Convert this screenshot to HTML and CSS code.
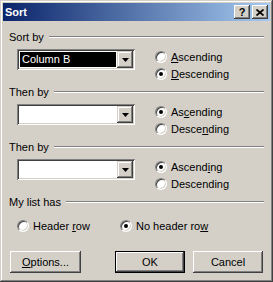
FILE: index.html
```html
<!DOCTYPE html>
<html lang="en">
<head>
    <meta charset="UTF-8">
    <title>Sort</title>
    <link rel="stylesheet" href="styles.css">
</head>
<body>
    <div class="window">
        <!-- Заголовок окна -->
        <div class="titlebar">
            <span class="title">Sort</span>
            <div class="caption-btns">
                <span class="cap-btn cap-help">?</span>
                <span class="cap-btn">
                    <svg width="8" height="7" viewBox="0 0 8 7"><path d="M0.5 0.5 L7.5 6.5 M7.5 0.5 L0.5 6.5" stroke="#000" stroke-width="1.7" fill="none"/></svg>
                </span>
            </div>
        </div>

        <div class="content">
            <!-- Sort by -->
            <div class="group">
                <div class="group-head"><span>Sort by</span><span class="etch"></span></div>
                <div class="group-row">
                    <div class="combo">
                        <div class="combo-field"><span class="selected">Column B</span></div>
                        <span class="combo-btn"><svg width="7" height="4" viewBox="0 0 7 4"><path d="M0 0 H7 L3.5 4 Z" fill="#000"/></svg></span>
                    </div>
                    <div class="radios">
                        <label class="radio"><span class="dot"></span><span><u>A</u>scending</span></label>
                        <label class="radio"><span class="dot checked"></span><span><u>D</u>escending</span></label>
                    </div>
                </div>
            </div>

            <!-- Then by -->
            <div class="group">
                <div class="group-head"><span>Then by</span><span class="etch"></span></div>
                <div class="group-row">
                    <div class="combo">
                        <div class="combo-field"></div>
                        <span class="combo-btn"><svg width="7" height="4" viewBox="0 0 7 4"><path d="M0 0 H7 L3.5 4 Z" fill="#000"/></svg></span>
                    </div>
                    <div class="radios">
                        <label class="radio"><span class="dot checked"></span><span>As<u>c</u>ending</span></label>
                        <label class="radio"><span class="dot"></span><span>Desce<u>n</u>ding</span></label>
                    </div>
                </div>
            </div>

            <!-- Then by -->
            <div class="group">
                <div class="group-head"><span>Then by</span><span class="etch"></span></div>
                <div class="group-row">
                    <div class="combo">
                        <div class="combo-field"></div>
                        <span class="combo-btn"><svg width="7" height="4" viewBox="0 0 7 4"><path d="M0 0 H7 L3.5 4 Z" fill="#000"/></svg></span>
                    </div>
                    <div class="radios">
                        <label class="radio"><span class="dot checked"></span><span>Ascend<u>i</u>ng</span></label>
                        <label class="radio"><span class="dot"></span><span>Descendin<u>g</u></span></label>
                    </div>
                </div>
            </div>

            <!-- My list has -->
            <div class="group">
                <div class="group-head"><span>My list has</span><span class="etch"></span></div>
                <div class="list-row">
                    <label class="radio radio-header"><span class="dot"></span><span>Header <u>r</u>ow</span></label>
                    <label class="radio"><span class="dot checked"></span><span>No header ro<u>w</u></span></label>
                </div>
            </div>

            <!-- Кнопки -->
            <div class="buttons">
                <span class="btn btn-options"><u>O</u>ptions...</span>
                <span class="btn btn-default">OK</span>
                <span class="btn btn-cancel">Cancel</span>
            </div>
        </div>
    </div>
</body>
</html>
```

FILE: styles.css
```css
* {
    margin: 0;
    padding: 0;
    box-sizing: border-box;
    font-family: "Liberation Sans", Arial, sans-serif;
}

body {
    background-color: #d4d0c8;
    color: #000;
    font-size: 11px;
}

/* Окно */
.window {
    width: 273px;
    height: 282px;
    padding: 3px;
    background: #d4d0c8;
    box-shadow: inset -1px -1px #404040, inset 1px 1px #d4d0c8,
                inset -2px -2px #808080, inset 2px 2px #fff;
    display: flex;
    flex-direction: column;
}

.titlebar {
    height: 18px;
    padding: 0 2px 0 2px;
    background: linear-gradient(to right, #0a246a, #a6caf0);
    display: flex;
    align-items: center;
    justify-content: space-between;
}

.title {
    color: #fff;
    font-weight: bold;
    font-size: 11px;
}

.caption-btns {
    display: flex;
    gap: 2px;
}

.cap-btn {
    width: 16px;
    height: 14px;
    background: #d4d0c8;
    box-shadow: inset -1px -1px #404040, inset 1px 1px #fff,
                inset -2px -2px #808080, inset 2px 2px #d4d0c8;
    display: flex;
    align-items: center;
    justify-content: center;
}

.cap-help {
    font-weight: bold;
    font-size: 11px;
    line-height: 14px;
}

/* Содержимое */
.content {
    flex: 1;
    padding: 9px 6px 0 6px;
    display: flex;
    flex-direction: column;
}

.group {
    margin-bottom: 3px;
}

.group-head {
    height: 14px;
    display: flex;
    align-items: center;
}

.etch {
    flex: 1;
    height: 2px;
    margin-left: 5px;
    border-top: 1px solid #808080;
    border-bottom: 1px solid #fff;
}

.group-row {
    margin-top: 4px;
    height: 34px;
    padding-left: 8px;
    display: flex;
}

.combo {
    width: 118px;
    height: 21px;
    margin-top: 1px;
    padding: 2px;
    background: #fff;
    box-shadow: inset 1px 1px #808080, inset -1px -1px #fff,
                inset 2px 2px #404040, inset -2px -2px #d4d0c8;
    display: flex;
}

.combo-field {
    flex: 1;
    padding: 1px;
}

.selected {
    display: block;
    height: 100%;
    padding-left: 2px;
    line-height: 15px;
    background: #000;
    color: #fff;
}

.combo-btn {
    width: 16px;
    height: 17px;
    background: #d4d0c8;
    box-shadow: inset -1px -1px #404040, inset 1px 1px #d4d0c8,
                inset -2px -2px #808080, inset 2px 2px #fff;
    display: flex;
    align-items: center;
    justify-content: center;
}

.radios {
    margin-left: 20px;
    display: flex;
    flex-direction: column;
}

.radio {
    height: 17px;
    display: flex;
    align-items: center;
    gap: 4px;
}

.dot {
    position: relative;
    width: 12px;
    height: 12px;
    border-radius: 50%;
    background: #fff;
    border: 1px solid;
    border-color: #808080 #fff #fff #808080;
    box-shadow: inset 1px 1px #404040, inset -1px -1px #d4d0c8;
}

.dot.checked::after {
    content: '';
    position: absolute;
    left: 3px;
    top: 3px;
    width: 4px;
    height: 4px;
    border-radius: 50%;
    background: #000;
}

.list-row {
    margin-top: 8px;
    padding-left: 8px;
    display: flex;
}

.radio-header {
    width: 103px;
}

/* Кнопки */
.buttons {
    margin-top: auto;
    margin-bottom: 6px;
    display: flex;
}

.btn {
    width: 70px;
    height: 22px;
    background: #d4d0c8;
    box-shadow: inset -1px -1px #404040, inset 1px 1px #fff,
                inset -2px -2px #808080, inset 2px 2px #d4d0c8;
    display: flex;
    align-items: center;
    justify-content: center;
}

.btn-options {
    width: 71px;
    margin-left: 1px;
}

.btn-default {
    margin-left: 34px;
    border: 1px solid #000;
}

.btn-cancel {
    margin-left: 8px;
}
```
